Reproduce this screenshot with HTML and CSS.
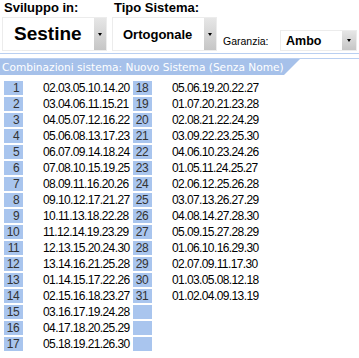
FILE: index.html
```html
<!DOCTYPE html>
<html lang="it">

<head>
    <meta charset="UTF-8">
    <title>Sistema</title>
    <link rel="stylesheet" href="styles.css">
</head>

<body>
    <div class="toolbar">
        <div class="field field-first">
            <div class="label">Sviluppo in:</div>
            <div class="select select-big">
                <span class="value">Sestine</span>
                <span class="drop"><i></i></span>
            </div>
        </div>
        <div class="field">
            <div class="label">Tipo Sistema:</div>
            <div class="select select-mid">
                <span class="value">Ortogonale</span>
                <span class="drop"><i></i></span>
            </div>
        </div>
        <div class="field-inline">
            <span class="small-label">Garanzia:</span>
            <div class="select select-small">
                <span class="value">Ambo</span>
                <span class="drop"><i></i></span>
            </div>
        </div>
    </div>

    <div class="rule"></div>

    <div class="banner">
        <div class="tab">Combinazioni sistema: Nuovo Sistema (Senza Nome)</div>
    </div>

    <div class="grid">
        <div class="n">1</div><div class="c">02.03.05.10.14.20</div><div class="n">18</div><div class="c">05.06.19.20.22.27</div>
        <div class="n">2</div><div class="c">03.04.06.11.15.21</div><div class="n">19</div><div class="c">01.07.20.21.23.28</div>
        <div class="n">3</div><div class="c">04.05.07.12.16.22</div><div class="n">20</div><div class="c">02.08.21.22.24.29</div>
        <div class="n">4</div><div class="c">05.06.08.13.17.23</div><div class="n">21</div><div class="c">03.09.22.23.25.30</div>
        <div class="n">5</div><div class="c">06.07.09.14.18.24</div><div class="n">22</div><div class="c">04.06.10.23.24.26</div>
        <div class="n">6</div><div class="c">07.08.10.15.19.25</div><div class="n">23</div><div class="c">01.05.11.24.25.27</div>
        <div class="n">7</div><div class="c">08.09.11.16.20.26</div><div class="n">24</div><div class="c">02.06.12.25.26.28</div>
        <div class="n">8</div><div class="c">09.10.12.17.21.27</div><div class="n">25</div><div class="c">03.07.13.26.27.29</div>
        <div class="n">9</div><div class="c">10.11.13.18.22.28</div><div class="n">26</div><div class="c">04.08.14.27.28.30</div>
        <div class="n">10</div><div class="c">11.12.14.19.23.29</div><div class="n">27</div><div class="c">05.09.15.27.28.29</div>
        <div class="n">11</div><div class="c">12.13.15.20.24.30</div><div class="n">28</div><div class="c">01.06.10.16.29.30</div>
        <div class="n">12</div><div class="c">13.14.16.21.25.28</div><div class="n">29</div><div class="c">02.07.09.11.17.30</div>
        <div class="n">13</div><div class="c">01.14.15.17.22.26</div><div class="n">30</div><div class="c">01.03.05.08.12.18</div>
        <div class="n">14</div><div class="c">02.15.16.18.23.27</div><div class="n">31</div><div class="c">01.02.04.09.13.19</div>
        <div class="n">15</div><div class="c">03.16.17.19.24.28</div><div class="n"></div><div class="c"></div>
        <div class="n">16</div><div class="c">04.17.18.20.25.29</div><div class="n"></div><div class="c"></div>
        <div class="n">17</div><div class="c">05.18.19.21.26.30</div><div class="n"></div><div class="c"></div>
    </div>
</body>
</html>
```

FILE: styles.css
```css
:root {
    --cell: #a9c5ee;
    --banner: #a6c1ea;
    --line: #b9cff1;
}

body {
    margin: 0;
    width: 359px;
    background: white;
    color: black;
    font-family: 'Liberation Sans', Arial, sans-serif;
    overflow: hidden;
}

/* top bar with the three selectors */
.toolbar {
    display: flex;
    align-items: flex-end;
    height: 51px;
    padding-left: 2px;
}

.field {
    display: flex;
    flex-direction: column;
    width: 105px;
    margin-right: 5px;
}

.label {
    font-size: 13px;
    font-weight: bold;
    height: 16px;
    line-height: 13px;
    padding-left: 2px;
}

.select {
    display: flex;
    background: white;
    border: 1px solid #ececec;
    box-sizing: border-box;
}

.select .value {
    flex: 1;
    display: flex;
    align-items: center;
    font-weight: bold;
}

.drop {
    width: 12px;
    display: flex;
    align-items: center;
    justify-content: center;
    background: linear-gradient(#e6e6e6, #c6c6c6);
}

.drop i {
    width: 0;
    height: 0;
    border-left: 2px solid transparent;
    border-right: 2px solid transparent;
    border-top: 3px solid black;
}

.select-big,
.select-mid {
    height: 34px;
}

.select-big .value {
    font-size: 19px;
    padding-left: 11px;
}

.select-mid .value {
    font-size: 13px;
    padding-left: 10px;
}

.field-inline {
    display: flex;
    align-items: center;
    padding-left: 1px;
}

.small-label {
    font-size: 10.5px;
    width: 57px;
    padding-top: 1px;
}

.select-small {
    width: 77px;
    height: 21px;
}

.select-small .value {
    font-size: 12.5px;
    padding-left: 5px;
}

.select-small .drop {
    width: 14px;
}

/* banner */
.rule {
    height: 1px;
    margin-top: 2px;
    background: var(--line);
}

.banner {
    margin-top: 4px;
    border-top: 1px solid var(--line);
}

.tab {
    width: 300px;
    height: 16px;
    line-height: 16px;
    padding-left: 2px;
    box-sizing: border-box;
    background: var(--banner);
    color: white;
    font-family: 'DejaVu Sans', Verdana, sans-serif;
    font-size: 10.6px;
    white-space: nowrap;
    clip-path: polygon(0 0, 100% 0, calc(100% - 16px) 100%, 0 100%);
}

/* combinations table */
.grid {
    display: grid;
    grid-template-columns: 19px 110px 19px 1fr;
    grid-auto-rows: 14px;
    row-gap: 2px;
    padding: 6px 0 0 4px;
    font-size: 12px;
    letter-spacing: -0.6px;
    line-height: 14px;
}

.n {
    background: var(--cell);
    color: #333;
    text-align: right;
    padding-right: 4px;
}

.c {
    padding-left: 20px;
}
```
